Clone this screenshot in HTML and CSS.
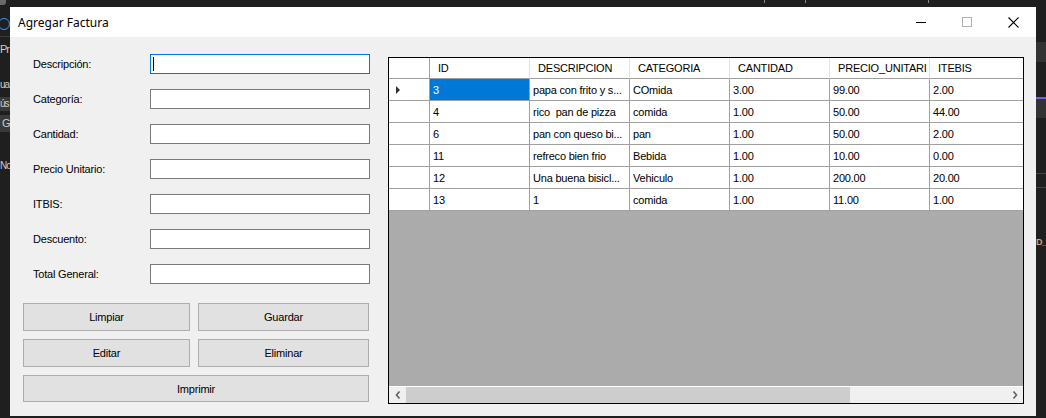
FILE: index.html
```html
<!DOCTYPE html>
<html lang="es">
<head>
<meta charset="utf-8">
<title>Agregar Factura</title>
<link rel="stylesheet" href="styles.css">
</head>
<body>
<div class="bg-frag frag-top-icon"></div>
<div class="bg-frag frag-circle"></div>
<div class="bg-frag frag-line-left"></div>
<div class="bg-frag frag-text frag-pr">Pr</div>
<div class="bg-frag frag-text frag-ua">ua</div>
<div class="bg-frag frag-row frag-us">ús</div>
<div class="bg-frag frag-row frag-g">G</div>
<div class="bg-frag frag-text frag-no">No</div>
<div class="bg-frag frag-r1"></div>
<div class="bg-frag frag-purple"></div>
<div class="bg-frag frag-r2"></div>
<div class="bg-frag frag-rl1"></div>
<div class="bg-frag frag-rl2"></div>
<div class="bg-frag frag-text frag-d">D_</div>
<div class="bg-frag frag-tick t1"></div>
<div class="bg-frag frag-tick t2"></div>
<div class="bg-frag frag-tick t3"></div>

<div class="desktop">
  <div class="window">
    <div class="titlebar">
      <div class="title">Agregar Factura</div>
      <div class="controls">
        <div class="ctl"><svg width="10" height="10" viewBox="0 0 10 10"><path d="M0 5.5H10" stroke="#000" stroke-width="1"/></svg></div>
        <div class="ctl"><svg width="10" height="10" viewBox="0 0 10 10"><rect x="0.5" y="0.5" width="9" height="9" fill="none" stroke="#b0b0b0" stroke-width="1"/></svg></div>
        <div class="ctl"><svg width="11" height="11" viewBox="0 0 11 11"><path d="M0.5 0.5L10.5 10.5M10.5 0.5L0.5 10.5" stroke="#000" stroke-width="1.1"/></svg></div>
      </div>
    </div>
    <div class="client">
      <div class="form-panel">
        <div class="fields">
          <div class="label">Descripción:</div><div class="textbox focused"><span class="caret"></span></div>
          <div class="label">Categoría:</div><div class="textbox"></div>
          <div class="label">Cantidad:</div><div class="textbox"></div>
          <div class="label">Precio Unitario:</div><div class="textbox"></div>
          <div class="label">ITBIS:</div><div class="textbox"></div>
          <div class="label">Descuento:</div><div class="textbox"></div>
          <div class="label">Total General:</div><div class="textbox"></div>
        </div>
        <div class="buttons">
          <div class="btn">Limpiar</div>
          <div class="btn">Guardar</div>
          <div class="btn">Editar</div>
          <div class="btn">Eliminar</div>
          <div class="btn wide">Imprimir</div>
        </div>
      </div>
      <div class="grid">
        <div class="rows">
          <div class="row head">
            <div class="cell rh"></div>
            <div class="cell">ID</div>
            <div class="cell">DESCRIPCION</div>
            <div class="cell">CATEGORIA</div>
            <div class="cell">CANTIDAD</div>
            <div class="cell">PRECIO_UNITARI</div>
            <div class="cell last">ITEBIS</div>
          </div>
          <div class="row">
            <div class="cell rh"><span class="arrow"></span></div>
            <div class="cell selected">3</div>
            <div class="cell">papa con frito y s...</div>
            <div class="cell">COmida</div>
            <div class="cell">3.00</div>
            <div class="cell">99.00</div>
            <div class="cell last">2.00</div>
          </div>
          <div class="row">
            <div class="cell rh"></div>
            <div class="cell">4</div>
            <div class="cell">rico&nbsp; pan de pizza</div>
            <div class="cell">comida</div>
            <div class="cell">1.00</div>
            <div class="cell">50.00</div>
            <div class="cell last">44.00</div>
          </div>
          <div class="row">
            <div class="cell rh"></div>
            <div class="cell">6</div>
            <div class="cell">pan con queso bi...</div>
            <div class="cell">pan</div>
            <div class="cell">1.00</div>
            <div class="cell">50.00</div>
            <div class="cell last">2.00</div>
          </div>
          <div class="row">
            <div class="cell rh"></div>
            <div class="cell">11</div>
            <div class="cell">refreco bien frio</div>
            <div class="cell">Bebida</div>
            <div class="cell">1.00</div>
            <div class="cell">10.00</div>
            <div class="cell last">0.00</div>
          </div>
          <div class="row">
            <div class="cell rh"></div>
            <div class="cell">12</div>
            <div class="cell">Una buena bisicl...</div>
            <div class="cell">Vehiculo</div>
            <div class="cell">1.00</div>
            <div class="cell">200.00</div>
            <div class="cell last">20.00</div>
          </div>
          <div class="row">
            <div class="cell rh"></div>
            <div class="cell">13</div>
            <div class="cell">1</div>
            <div class="cell">comida</div>
            <div class="cell">1.00</div>
            <div class="cell">11.00</div>
            <div class="cell last">1.00</div>
          </div>
        </div>
        <div class="empty"></div>
        <div class="hscroll">
          <div class="sbtn"><svg width="6" height="8" viewBox="0 0 6 8"><path d="M4.5 0.5L1.5 4L4.5 7.5" fill="none" stroke="#606060" stroke-width="1.6"/></svg></div>
          <div class="thumb"></div>
          <div class="track"></div>
          <div class="sbtn"><svg width="6" height="8" viewBox="0 0 6 8"><path d="M1.5 0.5L4.5 4L1.5 7.5" fill="none" stroke="#606060" stroke-width="1.6"/></svg></div>
        </div>
      </div>
    </div>
  </div>
</div>
</body>
</html>
```

FILE: styles.css
```css
* { box-sizing: border-box; }

body {
  margin: 0;
  width: 1046px;
  height: 418px;
  overflow: hidden;
  position: relative;
  background: #1f1f1f;
  font-family: "Liberation Sans", Arial, sans-serif;
  font-size: 11px;
  letter-spacing: -0.2px;
  color: #000;
}

/* background (other application behind the dialog) */
.bg-frag { position: absolute; }
.frag-top-icon { left: 0; top: 0; width: 6px; height: 5px; background: #6a6a6a; border-radius: 0 0 3px 0; }
.frag-circle { left: -2px; top: 18px; width: 12px; height: 12px; border: 1.5px solid #3794ff; border-radius: 50%; }
.frag-line-left { left: 0; top: 36px; width: 10px; height: 1px; background: #3c3c3c; }
.frag-text { color: #cccccc; font-size: 12px; letter-spacing: 0; }
.frag-pr { left: 0; top: 43px; font-size: 11px; letter-spacing: -1px; }
.frag-ua { left: 0; top: 79px; font-size: 10px; letter-spacing: -1px; }
.frag-row { left: 0; width: 10px; background: #3a3a3a; color: #cccccc; font-size: 10px; letter-spacing: -1px; overflow: hidden; }
.frag-us { top: 97px; height: 14px; line-height: 14px; }
.frag-g { top: 115px; height: 17px; line-height: 17px; padding-left: 2px; font-size: 11px; }
.frag-no { left: 0; top: 160px; font-size: 10px; letter-spacing: -1px; }
.frag-r1 { left: 1036px; top: 42px; width: 10px; height: 20px; background: #333333; }
.frag-purple { left: 1036px; top: 97px; width: 10px; height: 2px; background: #7160e8; }
.frag-r2 { left: 1036px; top: 99px; width: 10px; height: 19px; background: #333333; }
.frag-rl1 { left: 1036px; top: 173px; width: 10px; height: 1px; background: #444444; }
.frag-rl2 { left: 1036px; top: 187px; width: 10px; height: 1px; background: #444444; }
.frag-d { left: 1036px; top: 237px; color: #d7a07a; font-weight: bold; font-size: 9px; letter-spacing: -1px; }
.frag-tick { top: 0; width: 1px; height: 3px; background: #8a8a8a; }
.t1 { left: 764px; }
.t2 { left: 805px; }
.t3 { left: 928px; }

/* window */
.desktop { padding: 7px 10px 0 10px; }

.window {
  position: relative;
  width: 1026px;
  height: 409px;
  display: flex;
  flex-direction: column;
  background: #f0f0f0;
}

.titlebar {
  height: 30px;
  flex: none;
  background: #ffffff;
  display: flex;
  align-items: center;
}

.title {
  padding-left: 8px;
  font-family: "Noto Sans", "Open Sans", sans-serif;
  font-size: 12px;
  letter-spacing: 0;
  color: #000;
}

.controls { margin-left: auto; display: flex; }
.ctl { width: 46px; height: 30px; display: flex; align-items: center; justify-content: center; }
.ctl svg { display: block; }

.client { flex: 1; display: flex; }

/* form */
.form-panel {
  width: 378px;
  flex: none;
  padding: 17px 0 0 13px;
}

.fields {
  display: grid;
  grid-template-columns: 127px 220px;
  grid-auto-rows: 20px;
  row-gap: 15px;
  align-items: center;
}

.label { padding-left: 10px; white-space: nowrap; }

.textbox {
  position: relative;
  height: 20px;
  background: #fff;
  border: 1px solid #7a7a7a;
}
.textbox.focused { border-color: #0078d7; }
.caret {
  position: absolute;
  left: 2px;
  top: 2px;
  width: 1px;
  height: 14px;
  background: #000;
}

.buttons {
  margin-top: 19px;
  display: grid;
  grid-template-columns: 167px 171px;
  grid-auto-rows: 28px;
  gap: 8px;
}

.btn {
  background: #e1e1e1;
  border: 1px solid #adadad;
  display: flex;
  align-items: center;
  justify-content: center;
}
.btn.wide { grid-column: span 2; height: 27px; }

/* data grid */
.grid {
  margin-top: 20px;
  width: 636px;
  height: 347px;
  border: 1px solid #000;
  display: flex;
  flex-direction: column;
  background: #ababab;
}

.rows { background: #fff; flex: none; }

.row {
  display: grid;
  grid-template-columns: 41px 100px 100px 100px 100px 100px 93px;
  height: 22px;
}
.row.head { height: 21px; }

.cell {
  border-right: 1px solid #a0a0a0;
  border-bottom: 1px solid #a0a0a0;
  padding-left: 3px;
  white-space: nowrap;
  overflow: hidden;
  display: flex;
  align-items: center;
  background: #fff;
}
.cell.last { border-right: none; }
.head .cell { padding-left: 8px; border-right-color: #e3e3e3; border-bottom-color: #a0a0a0; }
.head .cell.rh { border-right-color: #a0a0a0; }
.cell.rh { padding-left: 7px; }
.cell.selected { background: #0078d7; color: #fff; }

.arrow {
  width: 0;
  height: 0;
  border-top: 4px solid transparent;
  border-bottom: 4px solid transparent;
  border-left: 4px solid #333;
}

.empty { flex: 1; }

.hscroll {
  height: 17px;
  flex: none;
  display: flex;
  background: #f0f0f0;
  border-top: 1px solid #ffffff;
}
.sbtn { width: 17px; display: flex; align-items: center; justify-content: center; }
.sbtn svg { display: block; }
.thumb { width: 444px; background: #cdcdcd; }
.track { flex: 1; }
```
